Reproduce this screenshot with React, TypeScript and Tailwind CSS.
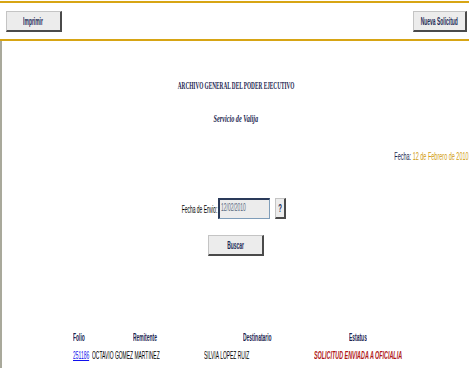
import React from "react";

const sans = "font-['Liberation_Sans',Arial,sans-serif]";
const serif = "font-['Liberation_Serif','Times_New_Roman',serif]";

// the reference is squeezed sideways, so text is narrowed with scale-x
function Sq({
  children,
  className = "",
  origin = "origin-center",
}: {
  children: React.ReactNode;
  className?: string;
  origin?: string;
}) {
  return (
    <span className={`inline-block whitespace-nowrap ${origin} ${className}`}>
      {children}
    </span>
  );
}

function Btn({ label, className = "" }: { label: string; className?: string }) {
  return (
    <button
      className={`flex items-center justify-center h-[21px] bg-[#ececec] border border-[#c4c4c4] border-r-2 border-b-2 border-r-[#4a4a4a] border-b-[#4a4a4a] ${className}`}
    >
      <Sq className={`${sans} text-[11px] font-bold text-[#1d2b55] scale-x-[0.45]`}>{label}</Sq>
    </button>
  );
}

const head = `${sans} text-[11px] font-bold text-[#1b2550] scale-x-[0.45]`;
const cell = `${sans} text-[11px] text-black scale-x-[0.45]`;

export default function App() {
  return (
    <div className="w-[470px] h-[368px] bg-white overflow-hidden">
      <div className="h-px" />
      <div className="h-[2px] bg-[#d7a514] mr-px" />
      <div className="h-[36px] flex justify-between items-start pt-[8px] pl-[6px] pr-[3px]">
        <Btn label="Imprimir" className="w-[56px]" />
        <Btn label="Nueva Solicitud" className="w-[54px]" />
      </div>
      <div className="h-[2px] bg-[#d7a514] mr-px" />

      <div className="h-[327px] border-l-2 border-[#a9a99b] flex flex-col">
        <div className="mt-[36px] h-[12px] leading-[12px] text-center">
          <Sq className={`${serif} text-[10px] font-bold text-[#1b2550] scale-x-[0.53]`}>
            ARCHIVO GENERAL DEL PODER EJECUTIVO
          </Sq>
        </div>
        <div className="mt-[21px] h-[12px] leading-[12px] text-center">
          <Sq className={`${serif} text-[10px] font-bold italic text-[#1b2550] scale-x-[0.62]`}>
            Servicio de Valija
          </Sq>
        </div>
        <div className="mt-[26px] h-[12px] leading-[12px] text-right pr-px">
          <Sq origin="origin-right" className={`${sans} text-[11px] scale-x-[0.5]`}>
            <span className="text-[#1b2550]">Fecha: </span>
            <span className="text-[#d19c12]">12 de Febrero de 2010</span>
          </Sq>
        </div>

        <div className="mt-[38px] flex items-center pl-[177px]">
          <div className="w-[38px] flex justify-end leading-[12px]">
            <Sq origin="origin-right" className={`${sans} text-[11px] text-black scale-x-[0.45]`}>
              Fecha de Envio:
            </Sq>
          </div>
          <div className="ml-px w-[52px] h-[21px] bg-[#ececec] border border-[#7f9db9] border-t-2 border-l-2 border-t-[#2a3a5a] border-l-[#2a3a5a] flex items-start pt-px pl-px leading-[12px]">
            <Sq origin="origin-left" className={`${sans} text-[11px] text-[#5a6a80] scale-x-[0.45]`}>
              12/02/2010
            </Sq>
          </div>
          <button className="ml-[5px] w-[11px] h-[21px] bg-[#ececec] border border-[#c4c4c4] border-r-2 border-b-2 border-r-[#4a4a4a] border-b-[#4a4a4a] flex items-center justify-center">
            <Sq className={`${sans} text-[10px] font-bold text-[#1d2b55] scale-x-[0.6]`}>?</Sq>
          </button>
        </div>

        <div className="mt-[16px] flex justify-center">
          <Btn label="Buscar" className="w-[56px]" />
        </div>

        <div className="mt-[73px] flex pl-[71px] h-[12px] leading-[12px]">
          <div className="w-[60px] shrink-0">
            <Sq origin="origin-left" className={head}>Folio</Sq>
          </div>
          <div className="w-[110px] shrink-0">
            <Sq origin="origin-left" className={head}>Remitente</Sq>
          </div>
          <div className="w-[106px] shrink-0">
            <Sq origin="origin-left" className={head}>Destinatario</Sq>
          </div>
          <div className="shrink-0">
            <Sq origin="origin-left" className={head}>Estatus</Sq>
          </div>
        </div>

        <div className="mt-[6px] flex pl-[71px] h-[12px] leading-[12px]">
          <div className="w-[19px] shrink-0">
            <Sq origin="origin-left" className={`${sans} text-[11px] text-[#1010ee] underline scale-x-[0.45]`}>251186</Sq>
          </div>
          <div className="w-[112px] shrink-0">
            <Sq origin="origin-left" className={cell}>OCTAVIO GOMEZ MARTINEZ</Sq>
          </div>
          <div className="w-[110px] shrink-0">
            <Sq origin="origin-left" className={cell}>SILVIA LOPEZ RUIZ</Sq>
          </div>
          <div className="shrink-0">
            <Sq origin="origin-left" className={`${sans} text-[11px] font-bold italic text-[#b01818] scale-x-[0.49]`}>SOLICITUD ENVIADA A OFICIALIA</Sq>
          </div>
        </div>
      </div>
    </div>
  );
}
